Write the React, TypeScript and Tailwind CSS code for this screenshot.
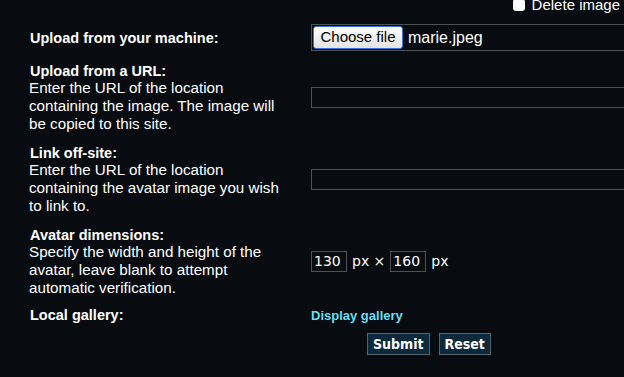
import React from "react";

const sans = { fontFamily: '"Liberation Sans", Arial, sans-serif' };

function Row({
  label,
  desc,
  children,
  className = "",
}: {
  label: string;
  desc?: string[];
  children: React.ReactNode;
  className?: string;
}) {
  return (
    <div className={`flex items-center ${className}`}>
      <div className="w-[311px] shrink-0 pl-[30px] text-white">
        <div className="text-[14.5px] font-bold leading-[16px]">{label}</div>
        {desc && (
          <div className="text-[15.2px] leading-[18px] -ml-[1px]">
            {desc.map((d, i) => (
              <div key={i}>{d}</div>
            ))}
          </div>
        )}
      </div>
      <div className="flex-1 min-w-0">{children}</div>
    </div>
  );
}

export default function App() {
  return (
    <div
      className="w-[624px] h-[377px] overflow-hidden bg-[#080b0f] text-white relative"
      style={sans}
    >
      <div className="flex justify-end items-center h-[12px] -mt-[1px] pr-[4px]">
        <span className="w-[12px] h-[12px] bg-white rounded-[3px] mr-[7px]" />
        <span className="text-[15px] leading-[14px] -mt-[1px] whitespace-nowrap">
          Delete image
        </span>
      </div>

      <Row label="Upload from your machine:" className="mt-[13px] h-[27px]">
        <div className="w-[340px] h-[27px] border border-[#4e5257] flex items-center pl-[1px]">
          <span className="h-[23px] w-[90px] shrink-0 rounded-[3px] border border-[#3a75d6] bg-gradient-to-b from-[#fdfdfd] to-[#e4e4e4] text-black text-[15px] flex items-center justify-center">
            Choose file
          </span>
          <span className="ml-[5px] text-[16px]">marie.jpeg</span>
        </div>
      </Row>

      <Row
        label="Upload from a URL:"
        desc={[
          "Enter the URL of the location",
          "containing the image. The image will",
          "be copied to this site.",
        ]}
        className="mt-[12px]"
      >
        <div className="w-[340px] h-[21px] border border-[#4e5257] mt-[-2px]" />
      </Row>

      <Row
        label="Link off-site:"
        desc={[
          "Enter the URL of the location",
          "containing the avatar image you wish",
          "to link to.",
        ]}
        className="mt-[12px]"
      >
        <div className="w-[340px] h-[21px] border border-[#4e5257] mt-[-2px]" />
      </Row>

      <Row
        label="Avatar dimensions:"
        desc={[
          "Specify the width and height of the",
          "avatar, leave blank to attempt",
          "automatic verification.",
        ]}
        className="mt-[12px]"
      >
        <div
          className="flex items-center mt-[-2px]"
          style={{ fontFamily: '"DejaVu Sans", Verdana, sans-serif' }}
        >
          <span className="w-[36px] h-[21px] border border-[#4e5257] text-[14px] leading-[19px] pl-[2px]">
            130
          </span>
          <span className="ml-[5px] text-[14px]">px ×</span>
          <span className="ml-[5px] w-[36px] h-[21px] border border-[#4e5257] text-[14px] leading-[19px] pl-[2px]">
            160
          </span>
          <span className="ml-[5px] text-[14px]">px</span>
        </div>
      </Row>

      <Row label="Local gallery:" className="mt-[6px]">
        <span className="text-[13px] font-bold text-[#66dff2]">Display gallery</span>
      </Row>

      <div className="flex gap-[9px] ml-[367px] mt-[6px]">
        <span
          className="h-[22px] px-[5px] border border-[#56606a] bg-[#0d2a3c] text-[14px] font-bold leading-[20px]"
          style={{ fontFamily: '"DejaVu Sans Condensed", "DejaVu Sans", sans-serif' }}
        >
          Submit
        </span>
        <span
          className="h-[22px] px-[5px] border border-[#56606a] bg-[#0d2a3c] text-[14px] font-bold leading-[20px]"
          style={{ fontFamily: '"DejaVu Sans Condensed", "DejaVu Sans", sans-serif' }}
        >
          Reset
        </span>
      </div>
    </div>
  );
}
